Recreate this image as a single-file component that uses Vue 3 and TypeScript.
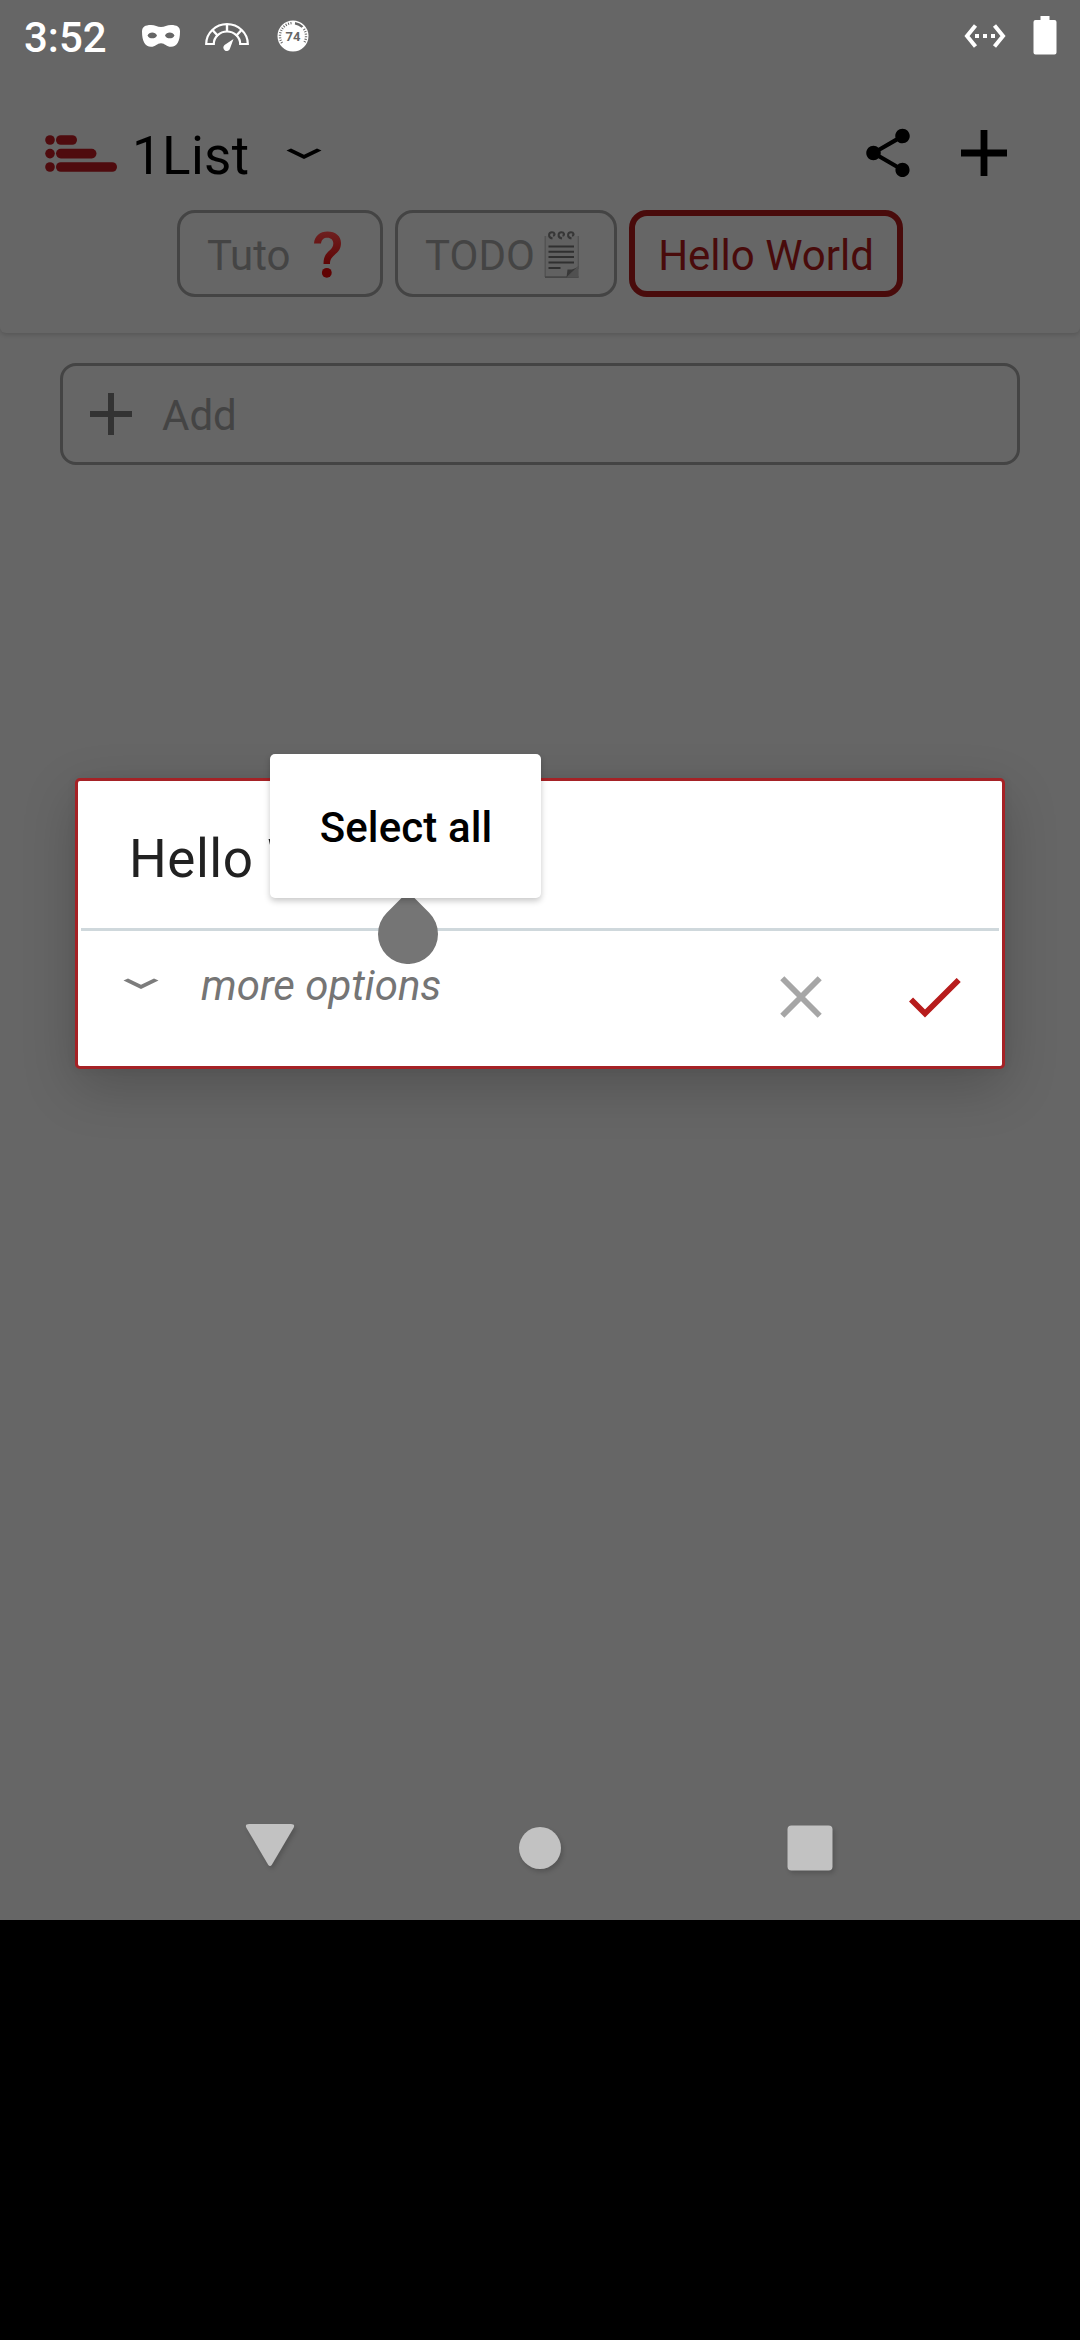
<script setup lang="ts">
interface Tab {
  label: string
  icon?: 'question' | 'notepad'
  active?: boolean
}

const tabs: Tab[] = [
  { label: 'Tuto', icon: 'question' },
  { label: 'TODO', icon: 'notepad' },
  { label: 'Hello World', active: true },
]
</script>

<template>
  <div class="device">
    <div class="screen">
      <header class="appbar">
        <div class="status">
          <span class="clock">3:52</span>
          <svg class="mask" width="40" height="24" viewBox="0 0 40 24">
            <path fill="#fff" fill-rule="evenodd" d="M10 1C14 1 16.500 3 20 3S26 1 30 1c6 0 9 2 9 6.500C39 17 36 22.800 30 22.800c-4.500 0-6-3.600-10-3.600s-5.500 3.600-10 3.600C4 22.800 1 17 1 7.500 1 3 4 1 10 1Z M6.500 11.500c1.500 3.800 8 3.800 9.500 0-1.500-4-8-4-9.500 0Z M24 11.500c1.500 3.800 8 3.800 9.500 0-1.500-4-8-4-9.500 0Z" />
          </svg>
          <svg class="gauge" width="44" height="28" viewBox="0 0 44 28">
            <path fill="none" stroke="#fff" stroke-width="2.200" d="M1.200 21a20.800 19.800 0 0 1 41.600 0h-7.600a13.200 12.500 0 0 0-26.400 0Z" />
            <path stroke="#fff" stroke-width="2.400" d="M22 1v8M7.500 7l5.500 6M36.500 7L31 13" />
            <path fill="#fff" d="M28.500 16L25 25.500a3.400 3.400 0 1 1-5.500-3.500Z" />
          </svg>
          <svg class="dial" width="32" height="32" viewBox="0 0 32 32">
            <circle cx="16" cy="16" r="15.500" fill="#fff" />
            <path fill="none" stroke="#666" stroke-width="2.400" stroke-dasharray="1 1.500" d="M5 23A13 13 0 0 1 16 3" />
            <path fill="none" stroke="#666" stroke-width="2.400" d="M18 3.200a13 13 0 0 1 7.500 3.800" />
            <path fill="none" stroke="#666" stroke-width="2.400" stroke-dasharray="1 1.500" d="M27 9a13 13 0 0 1 0 14" />
            <text x="16" y="20.800" text-anchor="middle" font-size="13" font-weight="700" fill="#666">74</text>
          </svg>
          <span class="spacer"></span>
          <svg class="ethernet" width="42" height="24" viewBox="0 0 42 24">
            <path fill="none" stroke="#fff" stroke-width="4" d="M11.500 1.500L3 12l8.500 10.500M30.500 1.500L39 12l-8.500 10.500" />
            <path fill="#fff" d="M11 10h4v4h-4zM19 10h4v4h-4zM27 10h4v4h-4z" />
          </svg>
          <svg class="battery" width="24" height="39" viewBox="0 0 24 39">
            <path fill="#fff" d="M7.500 0h9v4H21.500a2 2 0 0 1 2 2v30.500a2 2 0 0 1-2 2h-19a2 2 0 0 1-2-2V6a2 2 0 0 1 2-2H7.500Z" />
          </svg>
        </div>

        <div class="toolbar">
          <svg class="logo" width="73" height="38" viewBox="0 0 73 38">
            <g fill="#4f0b0e">
              <circle cx="5" cy="5" r="4.800" /><circle cx="5" cy="18.600" r="4.800" /><circle cx="5" cy="32" r="4.800" />
              <rect x="11" y=".2" width="21" height="9.600" rx="4.800" />
              <rect x="11" y="13.800" width="40.500" height="9.600" rx="4.800" />
              <rect x="11" y="27.200" width="61" height="9.600" rx="4.800" />
            </g>
          </svg>
          <h1 class="title">1List</h1>
          <svg class="caret" width="36" height="12" viewBox="0 0 36 12">
            <path fill="#000" d="M.5 2.500L5 .5 18 6.700 31 .5l4.500 2L18 11Z" />
          </svg>
          <span class="spacer"></span>
          <svg class="share" width="58" height="58" viewBox="0 0 24 24">
            <path d="M18 16.080c-.76 0-1.440.3-1.960.77L8.910 12.700c.05-.23.090-.46.090-.7s-.04-.47-.09-.7l7.050-4.110c.54.5 1.250.81 2.040.81 1.660 0 3-1.340 3-3s-1.340-3-3-3-3 1.340-3 3c0 .24.040.47.090.7L8.040 9.810C7.500 9.310 6.790 9 6 9c-1.660 0-3 1.340-3 3s1.340 3 3 3c.79 0 1.500-.31 2.040-.81l7.120 4.160c-.05.21-.08.43-.08.65 0 1.610 1.310 2.920 2.920 2.920s2.920-1.310 2.920-2.920-1.310-2.920-2.920-2.920Z" />
          </svg>
          <svg class="plus" width="46" height="46" viewBox="0 0 46 46">
            <path d="M19.600 0h6.800v19.600H46v6.800H26.400V46h-6.800V26.400H0v-6.800h19.600Z" />
          </svg>
        </div>

        <nav class="tabs">
          <button v-for="tab in tabs" :key="tab.label" class="tab" :class="[tab.icon, { active: tab.active }]">
            <span>{{ tab.label }}</span>
            <svg v-if="tab.icon === 'question'" width="29" height="48" viewBox="0 0 29 48">
              <defs>
                <linearGradient id="q" x1="0" y1="0" x2="0" y2="1">
                  <stop offset="0" stop-color="#6e2020" /><stop offset="1" stop-color="#600404" />
                </linearGradient>
              </defs>
              <path fill="url(#q)" d="M1 12.500C1.500 5 7 .5 14.500.5 22.500.5 28 5 28 12c0 6-3 9-6.500 12-3 2.800-4.500 4.500-4.500 9h-6.500c0-7 2-10 6-13.500 2.500-2.200 3.800-4 3.800-7 0-3.500-2.300-5.800-6-5.800-3.600 0-5.800 2-6.300 5.800Z" />
              <circle cx="13.800" cy="41.800" r="4.900" fill="#600202" />
            </svg>
            <svg v-if="tab.icon === 'notepad'" width="36" height="48" viewBox="0 0 36 48">
              <path fill="#616161" d="M1 5h33.500v41.500H1Z" />
              <path fill="none" stroke="#505050" stroke-width="1.200" d="M1.200 5v41M34.300 5v33" />
              <path stroke="#464646" stroke-width="1.800" d="M1 46.200h33.500" />
              <path fill="#383838" d="M22.500 46.500l1-8c4 .5 7.500-.5 11-3.500Z" />
              <path fill="#505050" d="M22.500 46.500L34.500 35v11.500Z" />
              <path stroke="#303030" stroke-width="1.900" d="M4.500 15.500h25.500M4.500 20.800h25.500M4.500 26h25.500M4.500 31.500h25.500M4.500 37h12" />
              <g fill="none" stroke="#363636" stroke-width="2">
                <path d="M8.500 7.500C3.500 6.500 4.500 1.200 8 1.200c2.800 0 3.500 2.800 1 3.600M18 7.500c-5-1-4-6.300-.5-6.300 2.800 0 3.500 2.800 1 3.600M27.500 7.500c-5-1-4-6.300-.5-6.300 2.800 0 3.500 2.800 1 3.600" />
              </g>
            </svg>
          </button>
        </nav>
      </header>

      <main class="content">
        <div class="add">
          <svg width="42" height="42" viewBox="0 0 42 42">
            <path fill="#333" d="M18 0h6v18h18v6H24v18h-6V24H0v-6h18Z" />
          </svg>
          <span>Add</span>
        </div>
      </main>

      <section class="dialog">
        <div class="field">Hello World</div>
        <div class="actions">
          <svg class="more-caret" width="36" height="12" viewBox="0 0 36 12">
            <path fill="#7c7c7c" d="M.5 2.500L5 .5 18 6.700 31 .5l4.500 2L18 11Z" />
          </svg>
          <em>more options</em>
          <span class="spacer"></span>
          <svg class="cancel" width="42" height="42" viewBox="0 0 42 42">
            <path stroke="#a6a6a6" stroke-width="5.800" d="M2.300 2.300l37.400 37.400M39.700 2.300L2.300 39.700" />
          </svg>
          <svg class="confirm" width="52" height="40" viewBox="0 0 52 40">
            <path fill="none" stroke="#b71c1c" stroke-width="5.800" d="M2 21.500L16 35.500 49.700 2" />
          </svg>
        </div>

        <svg class="handle" width="60" height="74" viewBox="0 0 60 74">
          <path fill="#757575" d="M8.800 22.800L26 5.600Q30 1.600 34 5.600L51.200 22.800A30 30 0 1 1 8.800 22.800Z" />
        </svg>
        <div class="popup">Select all</div>
      </section>

      <footer class="navbar">
        <svg width="60" height="60" viewBox="0 0 60 60">
          <path fill="#c2c2c2" d="M9 6h42q4.500 0 2.500 4L32 46.500q-2 3-4 0L6.500 10Q4.500 6 9 6Z" />
        </svg>
        <svg width="60" height="60" viewBox="0 0 60 60"><circle cx="30" cy="30" r="21" fill="#c2c2c2" /></svg>
        <svg width="60" height="60" viewBox="0 0 60 60"><rect x="7.500" y="7.500" width="45" height="45" rx="4" fill="#c2c2c2" /></svg>
      </footer>
    </div>
  </div>
</template>

<style>
body {
  margin: 0;
  background: #000;
}
</style>

<style scoped>
.device {
  width: 1080px;
  height: 2340px;
  background: #000;
  font-family: Roboto, "Noto Sans", sans-serif;
  font-size: 42px;
}
.device svg {
  display: block;
  flex: none;
}
.screen {
  position: relative;
  display: flex;
  flex-direction: column;
  height: 1920px;
  background: #666;
  overflow: hidden;
}
.spacer {
  flex: 1;
}
.appbar {
  box-sizing: border-box;
  height: 333px;
  border-radius: 0 0 6px 6px;
  box-shadow: 0 2px 4px rgba(0, 0, 0, 0.14);
}
.status {
  display: flex;
  align-items: flex-start;
  box-sizing: border-box;
  height: 72px;
  padding: 0 23px 0 24px;
  color: #fff;
}
.clock {
  width: 117px;
  margin-top: 12px;
  font-weight: 500;
  line-height: 51px;
}
.mask {
  margin-top: 24px;
}
.gauge {
  margin: 23px 0 0 24px;
}
.dial {
  margin: 20px 0 0 28px;
}
.ethernet {
  margin: 24px 27px 0 0;
}
.battery {
  margin-top: 16px;
}
.toolbar {
  display: flex;
  align-items: center;
  height: 138px;
  padding: 0 73px 0 45px;
  margin-top: -3px;
}
.logo {
  margin-top: 32px;
}
.title {
  margin: 36px 0 0 14px;
  width: 154px;
  font-size: 53px;
  font-weight: 400;
  line-height: 62px;
  letter-spacing: 0.3px;
  color: #000;
}
.toolbar .caret {
  margin-top: 31px;
}
.share {
  margin: 30px 44px 0 0;
}
.plus {
  margin-top: 30px;
}
.tabs {
  display: flex;
  justify-content: center;
  gap: 12px;
  margin-top: 3px;
}
.tab {
  display: flex;
  align-items: center;
  box-sizing: border-box;
  height: 87px;
  padding: 0 27px;
  border: 3px solid #444;
  border-radius: 18px;
  background: none;
  font: inherit;
  color: #444;
}
.tab span {
  padding-top: 3px;
}
.question {
  width: 206px;
  padding-right: 38px;
  justify-content: space-between;
}
.notepad {
  width: 222px;
  padding-right: 34px;
  justify-content: space-between;
}
.tab svg {
  margin-top: 2px;
}
.active {
  width: 274px;
  justify-content: center;
  padding: 0;
  border: 6px solid #490b0b;
  color: #490b0b;
}
.content {
  flex: 1;
  padding: 30px 60px 0;
}
.add {
  display: flex;
  align-items: center;
  gap: 30px;
  box-sizing: border-box;
  height: 102px;
  padding-left: 27px;
  border: 3px solid #444;
  border-radius: 16px;
  color: #444;
}
.add span {
  padding-top: 3px;
}
.dialog {
  position: absolute;
  left: 75px;
  top: 778px;
  box-sizing: border-box;
  width: 930px;
  height: 291px;
  border: 3px solid #a52226;
  border-radius: 5px;
  background: #fff;
  box-shadow: 0 18px 54px rgba(0, 0, 0, 0.2), 0 0 10px rgba(0, 0, 0, 0.06);
}
.field {
  box-sizing: border-box;
  height: 150px;
  margin: 0 3px;
  padding: 47px 48px 0;
  border-bottom: 3px solid #cfd8dc;
  font-size: 53px;
  line-height: 62px;
  letter-spacing: 0.5px;
  color: #212121;
}
.actions {
  display: flex;
  align-items: flex-start;
  height: 135px;
  padding: 0 41px 0 45px;
}
.more-caret {
  margin-top: 47px;
}
.actions em {
  margin: 30px 0 0 42px;
  line-height: 50px;
  color: #757575;
}
.cancel {
  margin: 45px 87px 0 0;
}
.confirm {
  margin-top: 47px;
}
.handle {
  position: absolute;
  left: 300px;
  top: 109px;
}
.popup {
  position: absolute;
  left: 192px;
  top: -27px;
  width: 271px;
  height: 144px;
  border-radius: 5px;
  background: #fff;
  box-shadow: 0 3px 6px rgba(0, 0, 0, 0.22);
  font-weight: 500;
  line-height: 147px;
  letter-spacing: 0.1px;
  text-indent: 1px;
  text-align: center;
  color: #000;
}
.navbar {
  display: flex;
  justify-content: space-between;
  height: 102px;
  padding: 0 240px;
}
.navbar svg {
  filter: drop-shadow(2px 3px 2px rgba(0, 0, 0, 0.16));
}
</style>
